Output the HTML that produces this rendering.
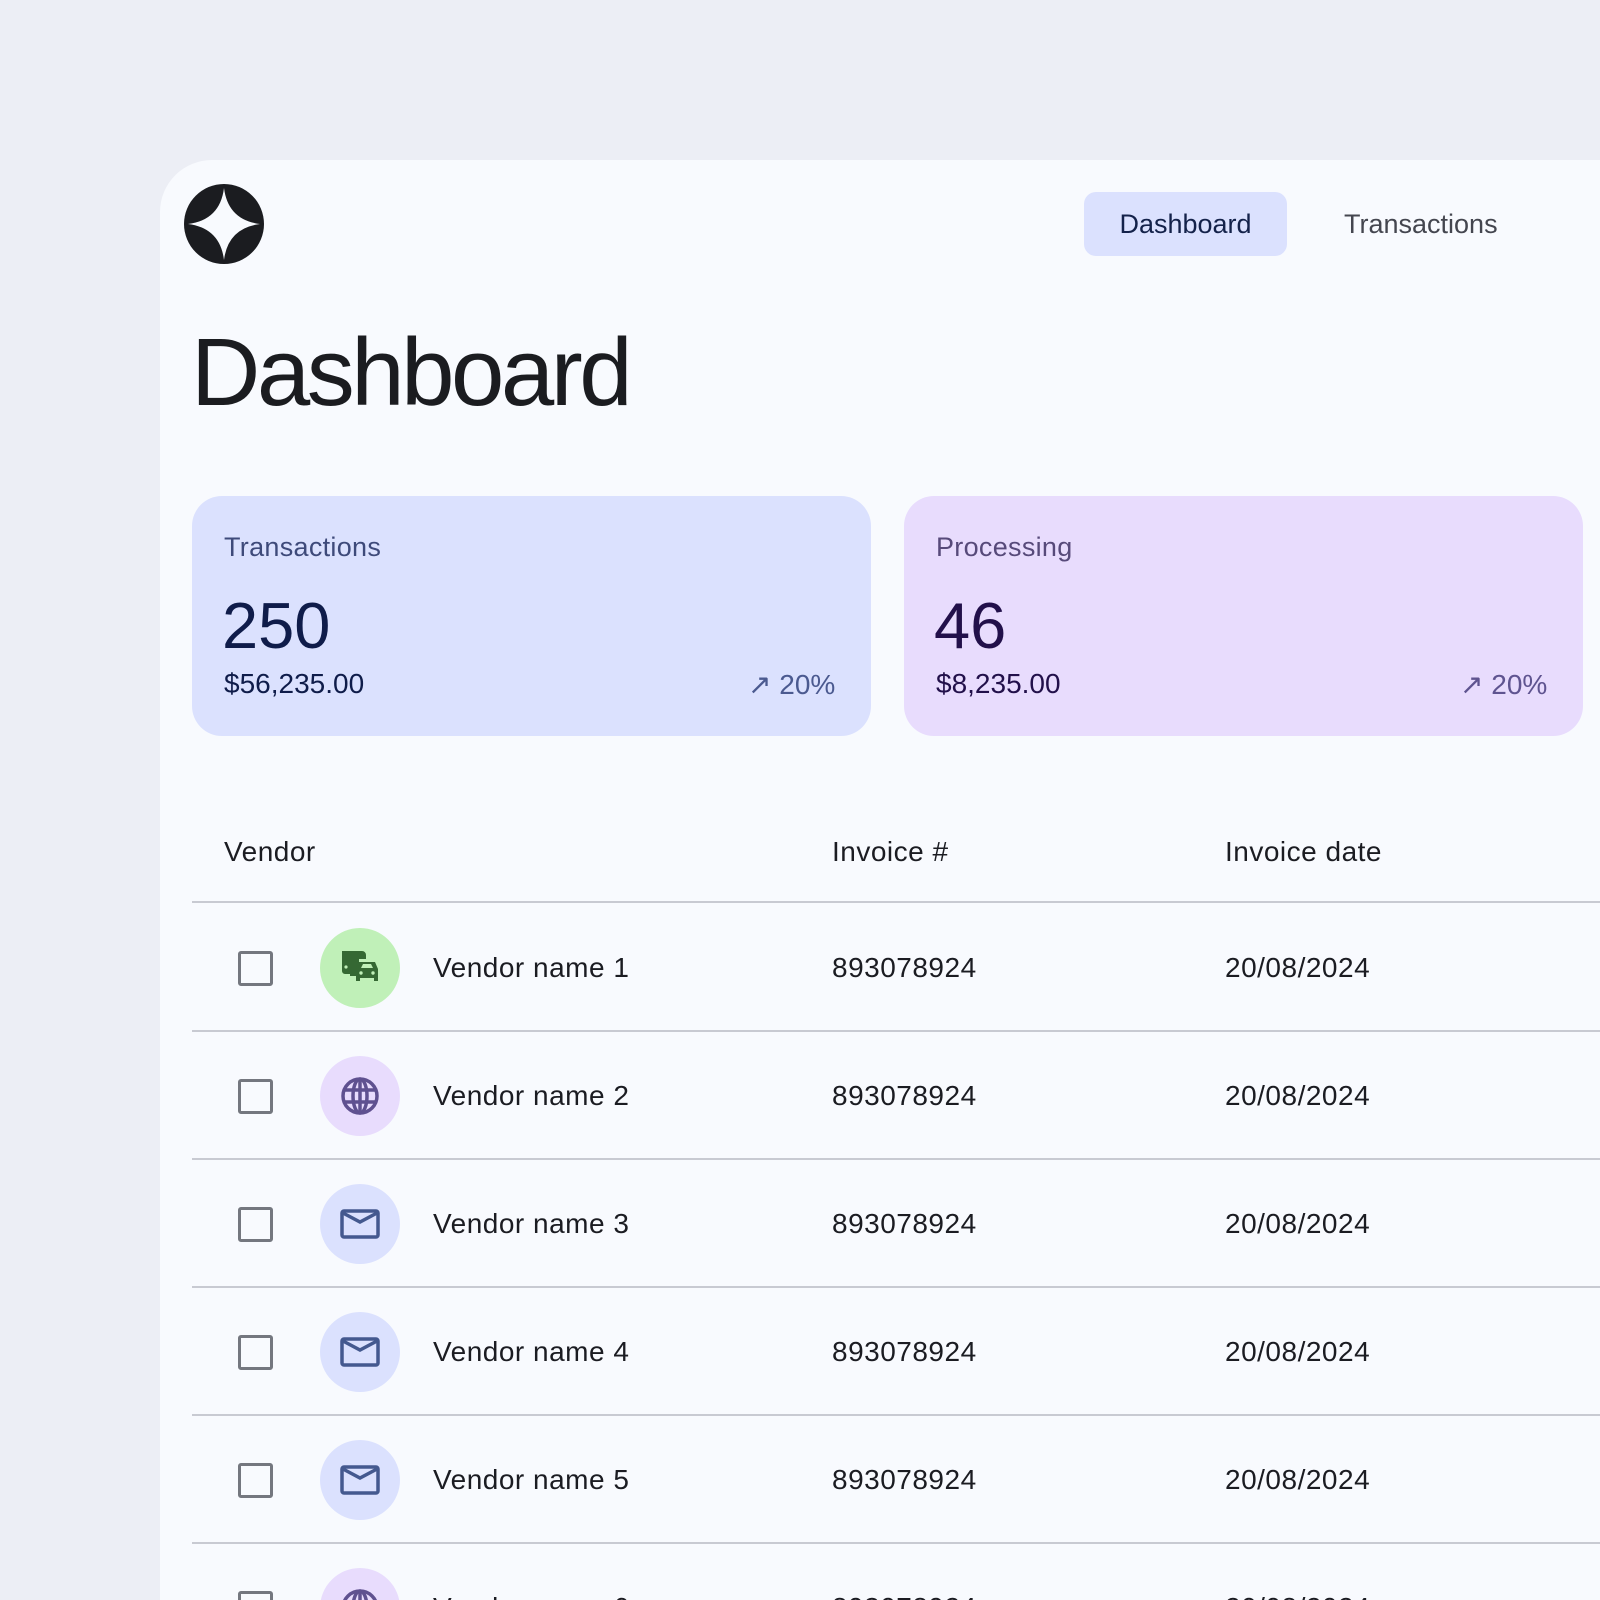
<!DOCTYPE html>
<html><head><meta charset="utf-8"><style>
*{margin:0;padding:0;box-sizing:border-box}
html,body{width:1600px;height:1600px;overflow:hidden}
body{background:#eceef5;font-family:"Liberation Sans",sans-serif}
#wrap{position:relative;width:1600px;height:1600px;overflow:hidden}
.card{position:absolute;left:160px;top:160px;width:1440px;height:1440px;background:#f8fafe;border-radius:52px 0 0 0}
.abs{position:absolute;white-space:nowrap}
.pill{position:absolute;left:1084px;top:192px;width:203px;height:64px;background:#dbe1fe;border-radius:12px;color:#14224a;font-size:27px;line-height:64px;text-align:center}
.stat{position:absolute;top:496px;height:240px;width:679px;border-radius:30px}
.row-line{position:absolute;left:192px;width:1408px;height:2px;background:#c8cad2}
.cb{position:absolute;left:238px;width:35px;height:35px;border:3px solid #74777f;border-radius:3px}
.ic{position:absolute;left:320px;width:80px;height:80px;border-radius:50%;display:flex;align-items:center;justify-content:center}
.t{position:absolute;font-size:28px;color:#1b1c22;white-space:nowrap;letter-spacing:0.5px}
</style></head><body><div id="wrap">
<div class="card"></div>
<svg class="abs" style="left:184px;top:184px" width="80" height="80" viewBox="0 0 80 80">
<circle cx="40" cy="40" r="40" fill="#1b1c20"/>
<path d="M40 4 Q44 36 76 40 Q44 44 40 76 Q36 44 4 40 Q36 36 40 4Z" fill="#f8fafe"/>
</svg>
<div class="pill">Dashboard</div>
<div class="abs" style="left:1344px;top:192px;line-height:64px;font-size:27px;color:#44464f">Transactions</div>
<div class="abs" style="left:191px;top:318px;font-size:96px;line-height:110px;letter-spacing:-3.5px;color:#1b1c20">Dashboard</div>

<div class="stat" style="left:192px;background:#dbe1fe"></div>
<div class="abs" style="left:224px;top:532px;font-size:27px;color:#3e4a7a;letter-spacing:0.3px">Transactions</div>
<div class="abs" style="left:222px;top:588px;font-size:65px;color:#0f1c4a">250</div>
<div class="abs" style="left:224px;top:668px;font-size:28px;color:#0f1c4a">$56,235.00</div>
<div class="abs" style="left:748px;top:668px;font-size:28px;color:#4b5a90">↗ 20%</div>

<div class="stat" style="left:904px;background:#e8dcfd"></div>
<div class="abs" style="left:936px;top:532px;font-size:27px;color:#574a7a;letter-spacing:0.3px">Processing</div>
<div class="abs" style="left:934px;top:588px;font-size:65px;color:#22104a">46</div>
<div class="abs" style="left:936px;top:668px;font-size:28px;color:#22104a">$8,235.00</div>
<div class="abs" style="left:1460px;top:668px;font-size:28px;color:#5f5490">↗ 20%</div>

<div class="t" style="left:224px;top:836px">Vendor</div>
<div class="t" style="left:832px;top:836px">Invoice #</div>
<div class="t" style="left:1225px;top:836px">Invoice date</div>
<div class="row-line" style="top:901px"></div>
<div class="row-line" style="top:1030px"></div>
<div class="row-line" style="top:1158px"></div>
<div class="row-line" style="top:1286px"></div>
<div class="row-line" style="top:1414px"></div>
<div class="row-line" style="top:1542px"></div>

<div class="cb" style="top:951px"></div>
<div class="ic" style="top:928px;background:#c0f0b8"><svg width="42" height="42" viewBox="0 0 42 42"><path d="M3 4h20a4 4 0 0 1 4 4v4h-7v14h-2v3h-7v-2H6a3 3 0 0 1-3-3z" fill="#356833"/><circle cx="7" cy="20" r="1.6" fill="#c0f0b8"/><path d="M17 22l3-7h16l3 7v12h-4v-3H21v3h-4z" fill="#356833"/><path d="M22 21l2-4h8l2 4z" fill="#c0f0b8"/><circle cx="22" cy="26" r="1.7" fill="#c0f0b8"/><circle cx="34" cy="26" r="1.7" fill="#c0f0b8"/></svg></div>
<div class="t" style="left:433px;top:952px">Vendor name 1</div>
<div class="t" style="left:832px;top:952px">893078924</div>
<div class="t" style="left:1225px;top:952px">20/08/2024</div>

<div class="cb" style="top:1079px"></div>
<div class="ic" style="top:1056px;background:#e8dcfd"><svg width="42" height="42" viewBox="0 0 42 42" fill="none" stroke="#5f5190" stroke-width="3.5"><circle cx="21" cy="21" r="17"/><ellipse cx="21" cy="21" rx="7" ry="17"/><path d="M4 15h34M4 27h34M21 4v34"/></svg></div>
<div class="t" style="left:433px;top:1080px">Vendor name 2</div>
<div class="t" style="left:832px;top:1080px">893078924</div>
<div class="t" style="left:1225px;top:1080px">20/08/2024</div>

<div class="cb" style="top:1207px"></div>
<div class="ic" style="top:1184px;background:#dbe1fe"><svg width="42" height="42" viewBox="0 0 42 42" fill="none" stroke="#44598f" stroke-width="3.5"><rect x="3" y="8" width="36" height="26" rx="2"/><path d="M4 10l17 9 17-9"/></svg></div>
<div class="t" style="left:433px;top:1208px">Vendor name 3</div>
<div class="t" style="left:832px;top:1208px">893078924</div>
<div class="t" style="left:1225px;top:1208px">20/08/2024</div>

<div class="cb" style="top:1335px"></div>
<div class="ic" style="top:1312px;background:#dbe1fe"><svg width="42" height="42" viewBox="0 0 42 42" fill="none" stroke="#44598f" stroke-width="3.5"><rect x="3" y="8" width="36" height="26" rx="2"/><path d="M4 10l17 9 17-9"/></svg></div>
<div class="t" style="left:433px;top:1336px">Vendor name 4</div>
<div class="t" style="left:832px;top:1336px">893078924</div>
<div class="t" style="left:1225px;top:1336px">20/08/2024</div>

<div class="cb" style="top:1463px"></div>
<div class="ic" style="top:1440px;background:#dbe1fe"><svg width="42" height="42" viewBox="0 0 42 42" fill="none" stroke="#44598f" stroke-width="3.5"><rect x="3" y="8" width="36" height="26" rx="2"/><path d="M4 10l17 9 17-9"/></svg></div>
<div class="t" style="left:433px;top:1464px">Vendor name 5</div>
<div class="t" style="left:832px;top:1464px">893078924</div>
<div class="t" style="left:1225px;top:1464px">20/08/2024</div>

<div class="cb" style="top:1591px"></div>
<div class="ic" style="top:1568px;background:#e8dcfd"><svg width="42" height="42" viewBox="0 0 42 42" fill="none" stroke="#5f5190" stroke-width="3.5"><circle cx="21" cy="21" r="17"/><ellipse cx="21" cy="21" rx="7" ry="17"/><path d="M4 15h34M4 27h34M21 4v34"/></svg></div>
<div class="t" style="left:433px;top:1592px">Vendor name 6</div>
<div class="t" style="left:832px;top:1592px">893078924</div>
<div class="t" style="left:1225px;top:1592px">20/08/2024</div>
</div></body></html>
